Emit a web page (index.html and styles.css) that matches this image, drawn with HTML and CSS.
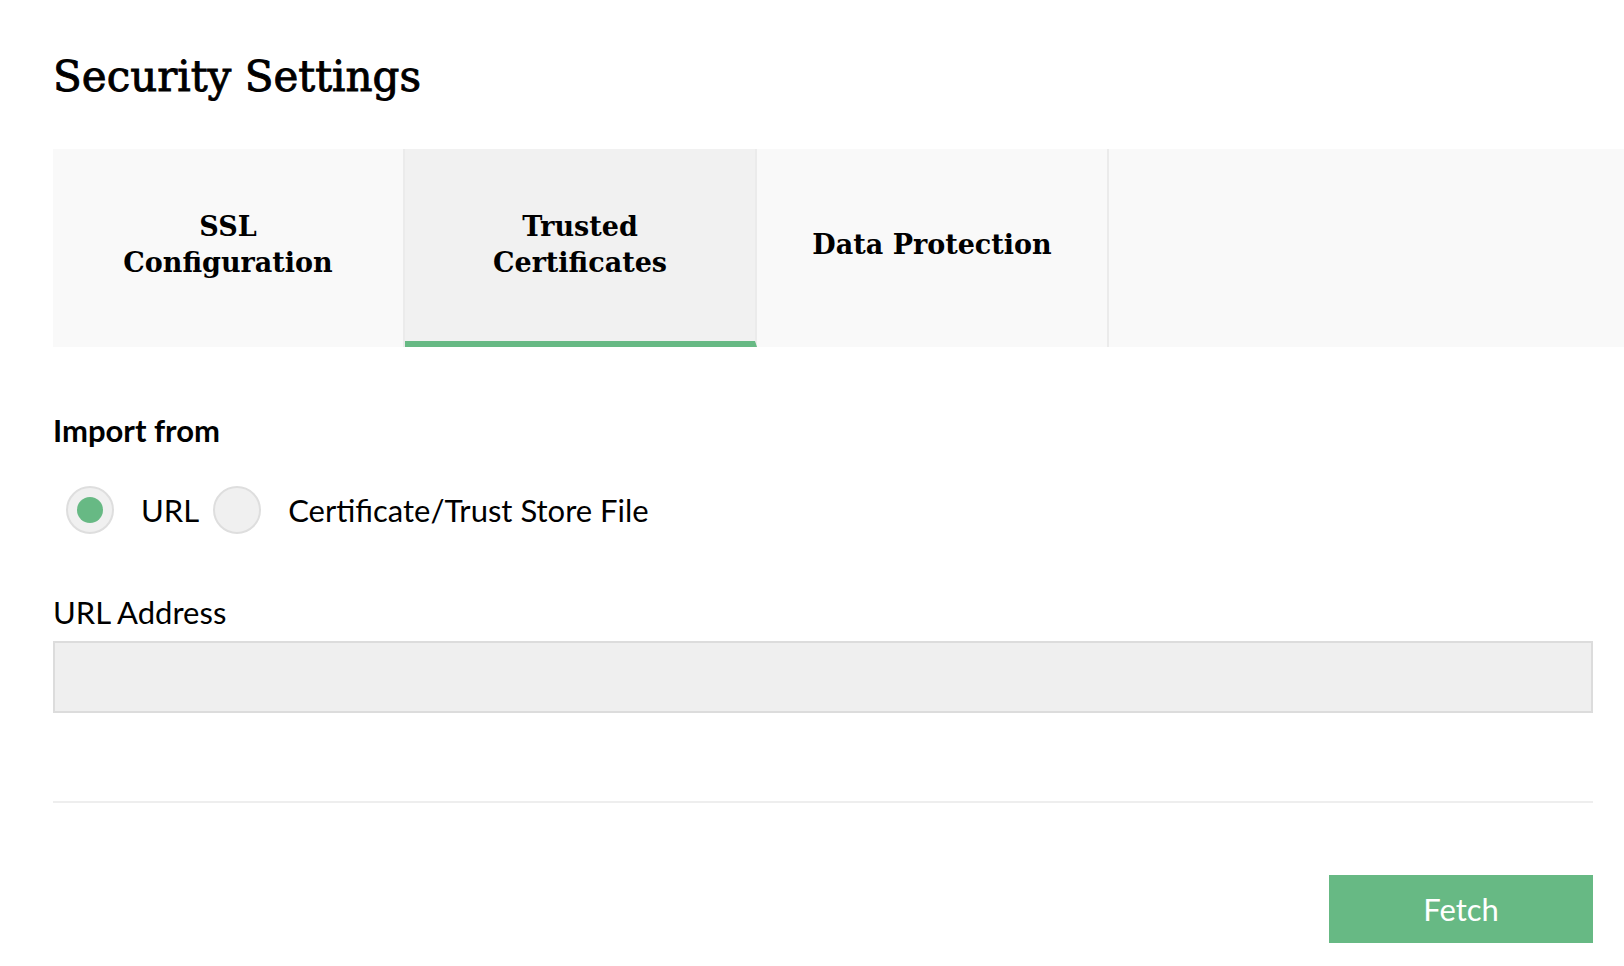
FILE: index.html
```html
<!DOCTYPE html>
<html>
<head>
<meta charset="utf-8">
<link rel="stylesheet" href="styles.css">
</head>
<body>
<div class="page">
  <h1 class="title">Security Settings</h1>
  <div class="tabs">
    <div class="tab"><span>SSL<br>Configuration</span></div>
    <div class="tab active"><span>Trusted<br>Certificates</span></div>
    <div class="tab"><span>Data Protection</span></div>
    <div class="tab-rest"></div>
  </div>
  <div class="section-label">Import from</div>
  <div class="radios">
    <label class="radio"><span class="dot checked"></span><span class="radio-text">URL</span></label>
    <label class="radio"><span class="dot"></span><span class="radio-text">Certificate/Trust Store File</span></label>
  </div>
  <div class="field-label">URL Address</div>
  <div class="input"></div>
  <div class="divider"></div>
  <div class="actions">
    <button class="btn">Fetch</button>
  </div>
</div>
</body>
</html>
```
FILE: styles.css
```css
html, body {
  margin: 0;
  padding: 0;
  background: #ffffff;
}
body {
  font-family: "Lato", "Liberation Sans", sans-serif;
  color: #000;
  overflow: hidden;
}
.page {
  padding: 0 31px 0 53px;
}
.title {
  margin: 0;
  padding-top: 52px;
  height: 149px;
  box-sizing: border-box;
  font-family: "DejaVu Serif", serif;
  font-weight: 400;
  -webkit-text-stroke: 0.9px #000;
  font-size: 42px;
  line-height: 50px;
  color: #000;
}
.tabs {
  display: flex;
  height: 198px;
  margin-right: -31px;
  background: #f9f9f9;
}
.tab {
  width: 350px;
  border-right: 2px solid #ebebeb;
  display: flex;
  align-items: center;
  justify-content: center;
  text-align: center;
  font-family: "DejaVu Serif", serif;
  font-weight: 700;
  font-size: 27px;
  line-height: 36px;
  padding-bottom: 6px;
  flex: none;
}
.tab.active {
  background: #f1f1f1;
  padding-bottom: 0;
  border-bottom: 6px solid #67b984;
}
.tab-rest {
  flex: 1;
}
.section-label {
  margin-top: 66px;
  font-weight: 700;
  font-size: 31px;
  line-height: 34px;
}
.radios {
  display: flex;
  align-items: center;
  margin-top: 39px;
  padding-left: 13px;
}
.radio {
  display: flex;
  align-items: center;
}
.dot {
  width: 44px;
  height: 44px;
  border: 2px solid #dedede;
  border-radius: 50%;
  background: #f0f0f0;
  display: flex;
  align-items: center;
  justify-content: center;
}
.dot.checked::after {
  content: "";
  width: 26px;
  height: 26px;
  border-radius: 50%;
  background: #67b984;
}
.radio-text {
  font-size: 31px;
  margin-left: 27px;
  margin-right: 14px;
}
.field-label {
  margin-top: 61px;
  font-size: 31px;
  line-height: 34px;
}
.input {
  margin-top: 12px;
  height: 68px;
  border: 2px solid #dcdcdc;
  background: #efefef;
}
.divider {
  margin-top: 88px;
  height: 2px;
  background: #eeeeee;
}
.actions {
  display: flex;
  justify-content: flex-end;
  margin-top: 72px;
}
.btn {
  width: 264px;
  height: 68px;
  border: 0;
  background: #67b984;
  color: #fff;
  font-family: "Lato", "Liberation Sans", sans-serif;
  font-size: 31px;
  padding: 0;
}
```
